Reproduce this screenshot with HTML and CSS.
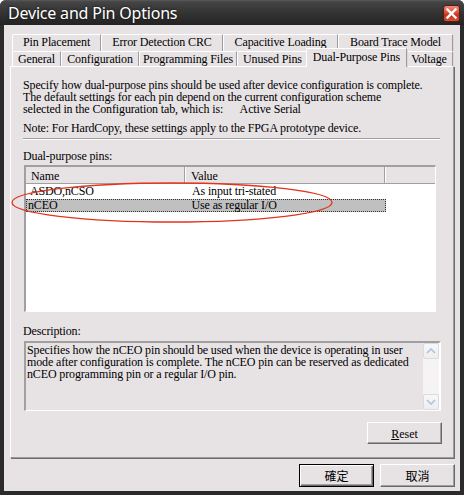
FILE: index.html
```html
<!DOCTYPE html>
<html>
<head>
<meta charset="utf-8">
<link rel="stylesheet" href="styles.css">
</head>
<body>
<div class="window">
  <div class="titlebar">
    <span class="title">Device and Pin Options</span>
    <span class="close"><svg width="11" height="11" viewBox="0 0 11 11"><path d="M1.5 1.5 L9.5 9.5 M9.5 1.5 L1.5 9.5" stroke="#fff" stroke-width="2.4" stroke-linecap="square"/></svg></span>
  </div>
  <div class="client">
    <div class="tabs">
      <div class="tabrow back">
        <div class="tab w-pin">Pin Placement</div>
        <div class="tab w-err">Error Detection CRC</div>
        <div class="tab w-cap">Capacitive Loading</div>
        <div class="tab w-board">Board Trace Model</div>
      </div>
      <div class="tabrow front">
        <div class="tab w-gen">General</div>
        <div class="tab w-conf">Configuration</div>
        <div class="tab w-prog">Programming Files</div>
        <div class="tab w-unused">Unused Pins</div>
        <div class="tab w-dual active">Dual-Purpose Pins</div>
        <div class="tab w-volt">Voltage</div>
      </div>
    </div>
    <div class="panel">
      <p class="intro">Specify how dual-purpose pins should be used after device configuration is complete.
The default settings for each pin depend on the current configuration scheme
selected in the Configuration tab, which is:      Active Serial</p>
      <p class="note">Note: For HardCopy, these settings apply to the FPGA prototype device.</p>
      <div class="sep"></div>
      <div class="label">Dual-purpose pins:</div>
      <div class="list">
        <div class="lhead">
          <div class="hcol c1">Name</div>
          <div class="hcol c2">Value</div>
          <div class="hcol c3"></div>
        </div>
        <div class="row">
          <span class="c1">ASDO,nCSO</span>
          <span class="c2">As input tri-stated</span>
        </div>
        <div class="row sel">
          <span class="c1">nCEO</span>
          <span class="c2">Use as regular I/O</span>
        </div>
      </div>
      <div class="label desc-label">Description:</div>
      <div class="desc">
        <div class="desc-text">Specifies how the nCEO pin should be used when the device is operating in user mode after configuration is complete. The nCEO pin can be reserved as dedicated nCEO programming pin or a regular I/O pin.</div>
        <div class="vscroll">
          <div class="sbtn"><svg width="10" height="6" viewBox="0 0 10 6"><path d="M1 5 L5 1 L9 5" fill="none" stroke="#a9c3e4" stroke-width="1.6"/></svg></div>
          <div class="strack"></div>
          <div class="sbtn"><svg width="10" height="6" viewBox="0 0 10 6"><path d="M1 1 L5 5 L9 1" fill="none" stroke="#a9c3e4" stroke-width="1.6"/></svg></div>
        </div>
      </div>
      <div class="reset-row">
        <button class="btn reset"><u>R</u>eset</button>
      </div>
    </div>
    <div class="buttons">
      <button class="btn default cjk">確定</button>
      <button class="btn cjk">取消</button>
    </div>
  </div>
  <svg class="annot" width="464" height="495" viewBox="0 0 464 495">
    <ellipse cx="172" cy="202.5" rx="160" ry="19.5" fill="none" stroke="#e2331f" stroke-width="1.3"/>
  </svg>
</div>
</body>
</html>
```
FILE: styles.css
```css
* { box-sizing: border-box; }
html, body { margin: 0; padding: 0; background: #fff; }
body { width: 464px; height: 495px; overflow: hidden; }

.window {
  position: relative;
  width: 464px;
  height: 495px;
  display: flex;
  flex-direction: column;
  background: #2b2b2b;
  border-radius: 6px 6px 0 0;
  font-family: "Liberation Serif", serif;
  font-size: 12px;
  letter-spacing: -0.14px;
  color: #000;
}

.titlebar {
  height: 25px;
  flex: none;
  display: flex;
  align-items: flex-start;
  justify-content: space-between;
  padding: 0 4px 0 8px;
  background: linear-gradient(#5a5a5a 0, #444 2px, #363636 45%, #232323 100%);
  border-radius: 6px 6px 0 0;
}
.title {
  font-family: "Noto Sans", sans-serif;
  font-size: 16px;
  line-height: 20px;
  margin-top: 3px;
  color: #fff;
  text-shadow: 0 0 3px rgba(0,0,0,0.8);
  letter-spacing: -0.2px;
}
.close {
  margin-top: 5px;
  width: 17px;
  height: 17px;
  border: 1px solid #5a1a10;
  border-radius: 3px;
  background: linear-gradient(#f08a78 0, #e0553f 40%, #c9311b 60%, #d5502f 100%);
  display: flex;
  align-items: center;
  justify-content: center;
}

.client {
  flex: 1;
  margin: 0 4px 4px 4px;
  background: #e7e3e5;
  padding: 9px 5px 0 6px;
  display: flex;
  flex-direction: column;
}

.tabs { flex: none; }
.tabrow { display: flex; padding-left: 2px; }
.tabrow.back { height: 17px; }
.tabrow.front { height: 15px; }
.tab {
  flex: none;
  height: 17px;
  text-align: center;
  line-height: 14px;
  white-space: nowrap;
  background: #e7e3e5;
  border-top: 1px solid #fff;
  border-left: 1px solid #fff;
  border-right: 1px solid #9b9b9b;
  box-shadow: 1px 0 0 #dcd8da;
  border-radius: 2px 2px 0 0;
}
.front .tab { height: 15px; }
.front .tab.active {
  position: relative;
  z-index: 2;
  height: 19px;
  margin: -3px -2px 0 -2px;
  padding-top: 1px;
}
.w-pin { width: 89px; }
.w-err { width: 122px; }
.w-cap { width: 115px; }
.w-board { width: 115px; }
.w-gen { width: 49px; }
.w-conf { width: 78px; }
.w-prog { width: 98px; }
.w-unused { width: 71px; }
.w-dual { width: 101px; }
.w-volt { width: 48px; }

.panel {
  width: 444px;
  height: 392px;
  flex: none;
  border-top: 1px solid #fff;
  border-left: 1px solid #fff;
  border-right: 1px solid #9b9b9b;
  border-bottom: 1px solid #9b9b9b;
  box-shadow: 1px 1px 0 #6e6e6e;
  padding: 12px 11px 0 12px;
  display: flex;
  flex-direction: column;
}
.intro, .note { margin: 0; line-height: 12px; white-space: pre; }
.note { margin-top: 7px; }
.sep {
  margin-top: 4px;
  height: 2px;
  width: 417px;
  border-top: 1px solid #a0a0a0;
  border-bottom: 1px solid #fff;
}
.label { line-height: 12px; margin-top: 10px; }

.list {
  margin-top: 3px;
  margin-left: 1px;
  width: 412px;
  height: 147px;
  background: #fff;
  border-top: 2px solid #a0a0a0;
  border-left: 2px solid #a0a0a0;
  border-right: 1px solid #fff;
  border-bottom: 1px solid #fff;
}
.lhead {
  display: flex;
  height: 17px;
  background: #e7e3e5;
  border-bottom: 1px solid #a0a0a0;
}
.hcol {
  height: 16px;
  line-height: 12px;
  padding-top: 3px;
  border-right: 1px solid #a0a0a0;
  box-shadow: inset 1px 0 0 #fff;
}
.lhead .c1 { width: 159px; padding-left: 5px; box-shadow: none; }
.lhead .c2 { width: 200px; padding-left: 6px; }
.lhead .c3 { flex: 1; border-right: none; }

.row { display: flex; height: 14px; line-height: 14px; white-space: nowrap; }
.row .c1 { width: 160px; padding-left: 4px; }
.row .c2 { width: 200px; padding-left: 6px; }
.row.sel {
  margin-top: 1px;
  height: 13px;
  line-height: 13px;
  width: 360px;
  background: #c0c0c0;
  border: 1px dotted #333;
}
.row.sel .c1 { width: 159px; padding-left: 1px; line-height: 11px; }
.row.sel .c2 { line-height: 11px; padding-left: 6px; }

.desc-label { margin-top: 13px; }
.desc {
  margin-top: 4px;
  margin-left: 1px;
  width: 417px;
  height: 70px;
  display: flex;
  border-top: 2px solid #a0a0a0;
  border-left: 2px solid #a0a0a0;
  border-right: 2px solid #fff;
  border-bottom: 1px solid #fff;
}
.desc-text {
  flex: 1;
  padding: 1px 0 0 1px;
  line-height: 12px;
}
.vscroll {
  width: 16px;
  flex: none;
  display: flex;
  flex-direction: column;
  background: #f5f3f4;
}
.sbtn {
  height: 16px;
  flex: none;
  display: flex;
  align-items: center;
  justify-content: center;
  background: linear-gradient(#f8f7f8, #efedee);
  border: 1px solid #dcdadd;
  border-radius: 2px;
}
.strack { flex: 1; }

.reset-row {
  display: flex;
  justify-content: flex-end;
  margin-top: 11px;
}
.btn {
  font-family: "Liberation Serif", serif;
  font-size: 12px;
  color: #000;
  background: #e7e3e5;
  padding: 0;
  margin: 0;
  border: 1px solid;
  border-color: #fff #696969 #696969 #fff;
  box-shadow: inset -1px -1px 0 #a0a0a0;
  border-radius: 0;
}
.btn.reset { width: 75px; height: 22px; line-height: 12px; padding-top: 2px; }
.buttons {
  display: flex;
  justify-content: flex-end;
  gap: 6px;
  margin-top: 6px;
}
.buttons .btn { width: 75px; height: 23px; }
.cjk { font-family: "Noto Sans CJK TC", sans-serif; font-size: 12px; line-height: 14px; padding-top: 1px; letter-spacing: 0; }
.btn.default {
  border: 1px solid #000;
  box-shadow: inset 1px 1px 0 #fff, inset -1px -1px 0 #696969, inset -2px -2px 0 #a0a0a0;
}

.annot {
  position: absolute;
  left: 0;
  top: 0;
  pointer-events: none;
}
```
